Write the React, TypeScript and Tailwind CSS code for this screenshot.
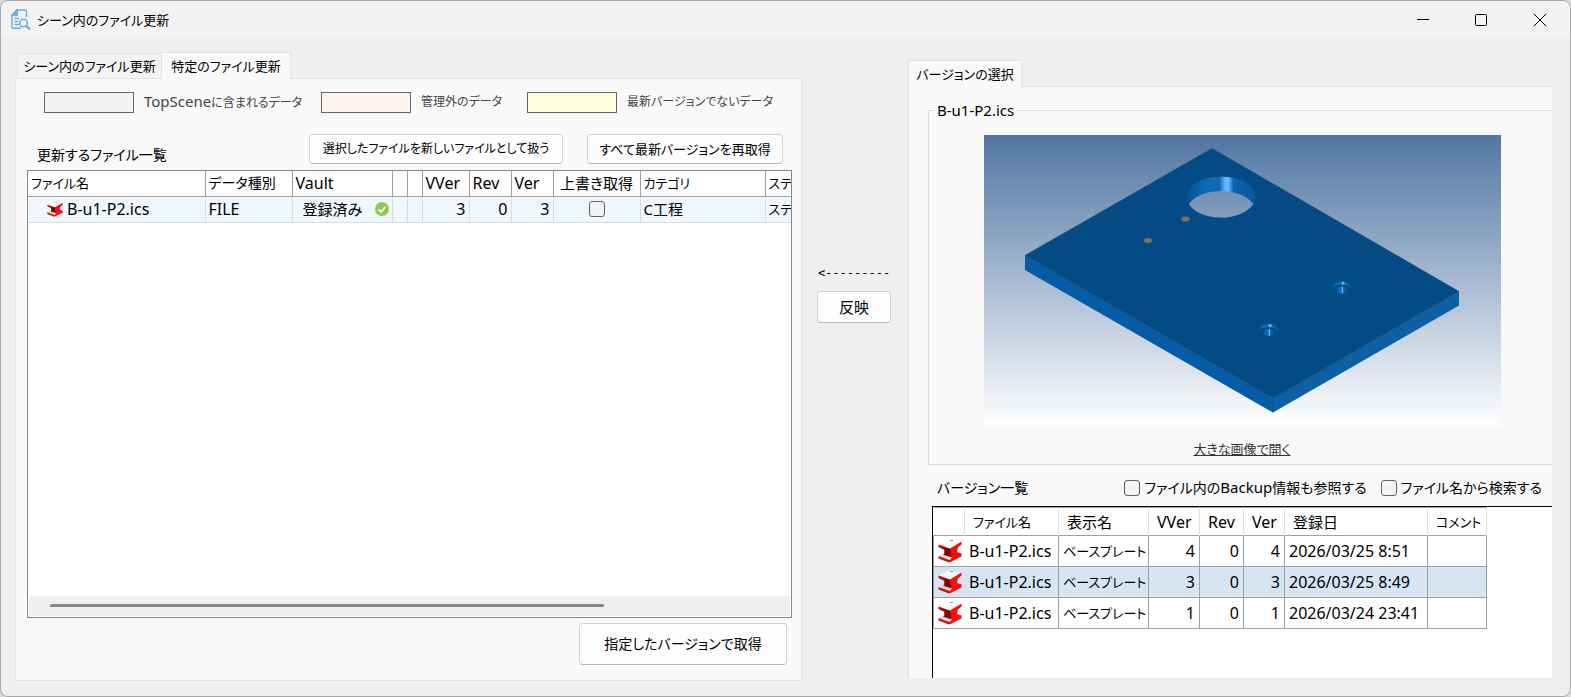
import type { ReactNode } from 'react';
import clsx from 'clsx';

const versions = [
  { vver: 4, rev: 0, ver: 4, date: '2026/03/25 8:51' },
  { vver: 3, rev: 0, ver: 3, date: '2026/03/25 8:49', selected: true },
  { vver: 1, rev: 0, ver: 1, date: '2026/03/24 23:41' },
];

function DocSearchIcon() {
  return (
    <svg width="20" height="22" viewBox="0 0 20 22" fill="none" stroke="#6aaee8" strokeWidth="1.5">
      <path d="M10 19.3H2.500Q1 19.3 1 17.800V6L6 1H14Q15.500 1 15.500 2.500V8M6 1V6H1" />
      <path d="M1 6L6 1V6Z" fill="#6aaee8" />
      <path d="M3.500 9.500H8M3.500 12.500H7M3.500 15.500H8" />
      <circle cx="12.500" cy="14" r="3.800" />
      <path d="M15.300 16.800L19 20.500" strokeWidth="2.200" />
    </svg>
  );
}

function PartIcon({ className }: { className?: string }) {
  return (
    <svg className={className} viewBox="0 0 24 24">
      <path d="M0.500 5.500L12 0.500L23 3L13 10Z" fill="#fafafa" />
      <path d="M12 1.500h3" stroke="#999" />
      <path d="M0.500 5.500L12 9.500L14 18L9 19.500L3.500 17L6.500 14.500V11L0.500 8Z" fill="#b80c0c" />
      <path d="M6.500 9L13 10.500L14 18L10 18L6.500 15.500Z" fill="#800303" />
      <path d="M12 9.500L23.500 2.500V5.500L20 8.500L19 13L23.500 14.500V17.500L12.500 23L11 21.500L13.500 18Z" fill="#fb0d0d" />
      <path d="M0.500 17L4 15.500L14 18.500L11.500 21.500Z" fill="#eadede" />
      <path d="M0.500 17V19.500L11 23.500L13.500 22L11.500 21Z" fill="#d01010" />
    </svg>
  );
}

function CheckIcon() {
  return (
    <svg width="14" height="14" viewBox="0 0 14 14">
      <circle cx="7" cy="7" r="7" fill="#8bcb45" />
      <path d="M3.500 7.500L6 9.800L10.500 4.800" fill="none" stroke="#fff" strokeWidth="2" />
    </svg>
  );
}

function PlateDrawing() {
  return (
    <svg className="w-[517px]" viewBox="0 0 517 292">
      <defs>
        <linearGradient id="sky" x1="0" y1="0" x2="0" y2="1">
          <stop offset="0" stopColor="#5176a3" />
          <stop offset="1" stopColor="#fff" />
        </linearGradient>
        <linearGradient id="bore" x1="0" y1="0" x2="1" y2="0">
          <stop offset="0" stopColor="#024e92" />
          <stop offset="0.25" stopColor="#0f68b2" />
          <stop offset="0.48" stopColor="#0f6ab8" />
          <stop offset="0.56" stopColor="#62b8ff" />
          <stop offset="0.61" stopColor="#62b8ff" />
          <stop offset="0.68" stopColor="#0c64b0" />
          <stop offset="1" stopColor="#0456a0" />
        </linearGradient>
        <clipPath id="hole">
          <ellipse cx="237" cy="62" rx="34.500" ry="20.500" />
        </clipPath>
        <clipPath id="holeBottom">
          <ellipse cx="237" cy="76.500" rx="34.500" ry="20.500" />
        </clipPath>
      </defs>
      <rect width="517" height="292" fill="url(#sky)" />
      <path d="M41 120.500L289 263.500V277.500L41 135Z" fill="#045ca6" />
      <path d="M475 156.500L289 263.500V277.500L475 170.500Z" fill="#0d60a5" />
      <path d="M228 13.500L475 156.500L289 263.500L41 120.500Z" fill="#044b85" stroke="#1d4a73" strokeWidth="0.700" />
      <path d="M289 263.500V277.500" stroke="#1d4a73" strokeWidth="0.700" />
      <ellipse cx="237" cy="62" rx="34.500" ry="20.500" fill="url(#bore)" />
      <g clipPath="url(#hole)">
        <g clipPath="url(#holeBottom)">
          <rect width="517" height="292" fill="url(#sky)" />
        </g>
      </g>
      {[[201.5, 84], [164, 105.5]].map(([x, y]) => (
        <ellipse key={x} cx={x} cy={y} rx="4.200" ry="2.600" fill="#75756d" stroke="#4c5257" strokeWidth="0.800" />
      ))}
      {[[357.5, 152.5], [284.5, 195]].map(([x, y]) => (
        <g key={x}>
          <ellipse cx={x} cy={y} rx="10" ry="6" fill="url(#bore)" />
          <ellipse cx={x} cy={y + 2} rx="9" ry="5" fill="#044b85" />
          <ellipse cx={x} cy={y + 2.5} rx="5.500" ry="3.500" fill="url(#bore)" />
        </g>
      ))}
    </svg>
  );
}

function Swatch({ color, className, children }: { color: string; className?: string; children: ReactNode }) {
  return (
    <div className={clsx('flex h-[21px] items-center gap-[10px]', className)}>
      <span className={clsx('h-[21px] w-[90px] shrink-0 border border-[#666]', color)} />
      <span className="pb-[2px] text-xs leading-5 whitespace-nowrap text-[#444]">{children}</span>
    </div>
  );
}

function Button({ className, children }: { className?: string; children: ReactNode }) {
  return (
    <button className={clsx('rounded border border-[#d0d0d0] border-b-[#bababa] bg-[#fdfdfd] whitespace-nowrap', className)}>
      {children}
    </button>
  );
}

function CheckBox({ id, label }: { id: string; label?: string }) {
  return (
    <input
      id={id}
      type="checkbox"
      aria-label={label}
      className="size-4 appearance-none rounded-[3px] border border-[#626262] bg-[#f3f3f3]"
    />
  );
}

function FileTable() {
  return (
    <table className="w-[853px] table-fixed border-collapse text-base leading-5">
      <colgroup>
        <col className="w-[177px]" />
        <col className="w-[87px]" />
        <col className="w-[100px]" />
        <col className="w-[15px]" />
        <col className="w-[15px]" />
        <col className="w-[47px]" />
        <col className="w-[42px]" />
        <col className="w-[42px]" />
        <col className="w-[87px]" />
        <col className="w-[125px]" />
        <col className="w-[116px]" />
      </colgroup>
      <thead>
        <tr className="h-[25px] text-left *:border-r *:border-b *:border-[#a0a0a0] *:px-[3px] *:py-0 *:font-normal *:whitespace-nowrap">
          <th className="text-[13px]">ファイル名</th>
          <th className="text-sm">データ種別</th>
          <th>Vault</th>
          <th />
          <th />
          <th>VVer</th>
          <th>Rev</th>
          <th>Ver</th>
          <th className="text-center text-[15px]">上書き取得</th>
          <th className="text-[13px]">カテゴリ</th>
          <th className="text-[13px]">ステータス</th>
        </tr>
      </thead>
      <tbody>
        <tr className="h-[26px] bg-[#eff7ff] *:border-r *:border-b *:border-[#dcdcdc] *:px-[3px] *:py-0 *:whitespace-nowrap">
          <td>
            <div className="flex items-center gap-1 pl-4">
              <PartIcon className="size-4" />
              B-u1-P2.ics
            </div>
          </td>
          <td>FILE</td>
          <td>
            <div className="flex items-center justify-between pl-[7px] text-[15px]">
              登録済み
              <CheckIcon />
            </div>
          </td>
          <td />
          <td />
          <td className="text-right">3</td>
          <td className="text-right">0</td>
          <td className="text-right">3</td>
          <td>
            <div className="flex justify-center">
              <CheckBox id="overwrite" label="上書き取得" />
            </div>
          </td>
          <td className="text-[15px]">C工程</td>
          <td className="text-[13px]">ステータス</td>
        </tr>
      </tbody>
    </table>
  );
}

function VersionTable() {
  return (
    <table className="w-[553px] table-fixed border-collapse border-t border-[#a0a0a0] text-base leading-5">
      <colgroup>
        <col className="w-[31px]" />
        <col className="w-[94px]" />
        <col className="w-[90px]" />
        <col className="w-[51px]" />
        <col className="w-[44px]" />
        <col className="w-[41px]" />
        <col className="w-[143px]" />
        <col className="w-[59px]" />
      </colgroup>
      <thead>
        <tr className="h-7 text-left *:border-r *:border-r-[#e0e0e0] *:px-2 *:py-0 *:font-normal *:whitespace-nowrap">
          <th />
          <th className="text-[13px]">ファイル名</th>
          <th className="text-[15px]">表示名</th>
          <th>VVer</th>
          <th>Rev</th>
          <th>Ver</th>
          <th className="text-[15px]">登録日</th>
          <th className="text-[13px]">コメント</th>
        </tr>
      </thead>
      <tbody>
        {versions.map((v) => (
          <tr
            key={v.vver}
            className={clsx(
              'h-[31px] *:border *:border-[#a0a0a0] *:px-1 *:py-0 *:whitespace-nowrap',
              v.selected && 'bg-[#d7e4f2]',
            )}
          >
            <td colSpan={2}>
              <div className="flex items-center gap-[7px]">
                <PartIcon className="size-6" />
                B-u1-P2.ics
              </div>
            </td>
            <td className="text-[13px]">ベースプレート</td>
            <td className="text-right">{v.vver}</td>
            <td className="text-right">{v.rev}</td>
            <td className="text-right">{v.ver}</td>
            <td>{v.date}</td>
            <td />
          </tr>
        ))}
      </tbody>
    </table>
  );
}

export default function App() {
  return (
    <div className="h-screen min-h-[697px] bg-[#d8d8d8] font-['Noto_Sans','Noto_Sans_CJK_JP',sans-serif] text-[13px] leading-5 text-black [font-feature-settings:'palt']">
      <div className="flex h-full flex-col overflow-hidden rounded-lg border border-[#a8a8a8] bg-[#efefef]">
        <header className="flex h-[37px] shrink-0 items-center bg-[#f3f3f3] pl-[10px]">
          <DocSearchIcon />
          <h1 className="ml-[6px] flex-1">シーン内のファイル更新</h1>
          <button aria-label="最小化" className="flex w-[59px] justify-center">
            <svg width="12" height="12" stroke="#000"><path d="M0 5.500H12" /></svg>
          </button>
          <button aria-label="最大化" className="flex w-[58px] justify-center">
            <svg width="12" height="12" stroke="#000" fill="none"><rect x="0.500" y="0.500" width="11" height="11" rx="1" /></svg>
          </button>
          <button aria-label="閉じる" className="flex w-[60px] justify-center">
            <svg width="12" height="12" stroke="#000"><path d="M0 0L12 12M12 0L0 12" /></svg>
          </button>
        </header>

        <main className="flex min-h-0 flex-1 pl-[14px]">
          <section className="flex w-[787px] shrink-0 flex-col pt-[14px] pb-[15px]">
            <div className="-mb-px flex items-end pl-[2px]" role="tablist">
              <button role="tab" className="mb-px h-[25px] w-[144px] border border-r-0 border-b-0 border-[#e3e3e3] bg-[#f3f3f3] whitespace-nowrap">
                シーン内のファイル更新
              </button>
              <button role="tab" aria-selected className="z-10 h-[27px] w-[130px] border border-b-0 border-[#e3e3e3] bg-[#f9f9f9] whitespace-nowrap">
                特定のファイル更新
              </button>
            </div>
            <div className="flex min-h-0 flex-1 flex-col border border-[#e3e3e3] bg-[#f9f9f9] pt-[13px] pr-[9px] pl-[11px]">
              <div className="flex pl-[17px]">
                <Swatch color="bg-[#f3f3f3]" className="w-[277px]">
                  <span className="text-[15px] leading-5">TopScene</span>に含まれるデータ
                </Swatch>
                <Swatch color="bg-[#fff3ee]" className="w-[206px]">管理外のデータ</Swatch>
                <Swatch color="bg-[#ffffe0]">最新バージョンでないデータ</Swatch>
              </div>
              <div className="mt-[21px] flex items-start pr-[9px] pl-[10px]">
                <h2 className="mt-[11px] flex-1 text-sm leading-5">更新するファイル一覧</h2>
                <Button className="mr-6 h-[30px] w-[254px] text-xs">選択したファイルを新しいファイルとして扱う</Button>
                <Button className="h-[30px] w-[196px]">すべて最新バージョンを再取得</Button>
              </div>
              <div className="mt-[5px] flex flex-1 flex-col overflow-hidden border border-[#828790] bg-white">
                <div className="flex-1 overflow-hidden">
                  <FileTable />
                </div>
                <div className="m-px h-5 bg-[#efefef] px-[21px] pt-2">
                  <div className="h-[3px] w-[554px] rounded-full bg-[#868686]" />
                </div>
              </div>
              <Button className="mt-[5px] mr-[5px] mb-[15px] h-[42px] w-[208px] shrink-0 self-end text-sm">指定したバージョンで取得</Button>
            </div>
          </section>

          <div className="flex w-[106px] shrink-0 flex-col items-center pt-[225px] pr-[2px]">
            <span className="font-['DejaVu_Sans_Mono',monospace] text-xs leading-5">&lt;---------</span>
            <Button className="mt-2 h-8 w-[74px] text-[15px]">反映</Button>
          </div>

          <section className="mr-[18px] flex min-w-0 flex-1 flex-col pt-[22px] pb-[18px]">
            <div className="-mb-px flex" role="tablist">
              <button role="tab" aria-selected className="z-10 h-[27px] w-[114px] border border-b-0 border-[#e3e3e3] bg-[#f9f9f9] whitespace-nowrap">
                バージョンの選択
              </button>
            </div>
            <div className="flex min-h-0 flex-1 flex-col overflow-hidden border-t border-l border-[#e3e3e3] bg-[#f9f9f9] pt-[13px]">
              <fieldset className="ml-[19px] flex h-[365px] shrink-0 flex-col items-center border border-r-0 border-[#dcdcdc] pl-[3px]">
                <legend className="ml-[3px] px-[2px] text-[15px]">B-u1-P2.ics</legend>
                <div className="mt-[15px]">
                  <PlateDrawing />
                </div>
                <a href="#image" className="mt-3 text-[#333] underline">大きな画像で開く</a>
              </fieldset>
              <div className="mt-3 flex items-center pr-[10px] pl-7 text-sm leading-5">
                <h2 className="flex-1">バージョン一覧</h2>
                <div className="flex items-center gap-1">
                  <CheckBox id="backup" />
                  <label htmlFor="backup">
                    ファイル内の<span className="text-[15px] leading-5">Backup</span>情報も参照する
                  </label>
                </div>
                <div className="ml-[14px] flex items-center gap-1">
                  <CheckBox id="byname" />
                  <label htmlFor="byname">ファイル名から検索する</label>
                </div>
              </div>
              <div className="mt-2 ml-[23px] flex-1 overflow-hidden border-t border-l border-black bg-white">
                <VersionTable />
              </div>
            </div>
          </section>
        </main>
      </div>
    </div>
  );
}
